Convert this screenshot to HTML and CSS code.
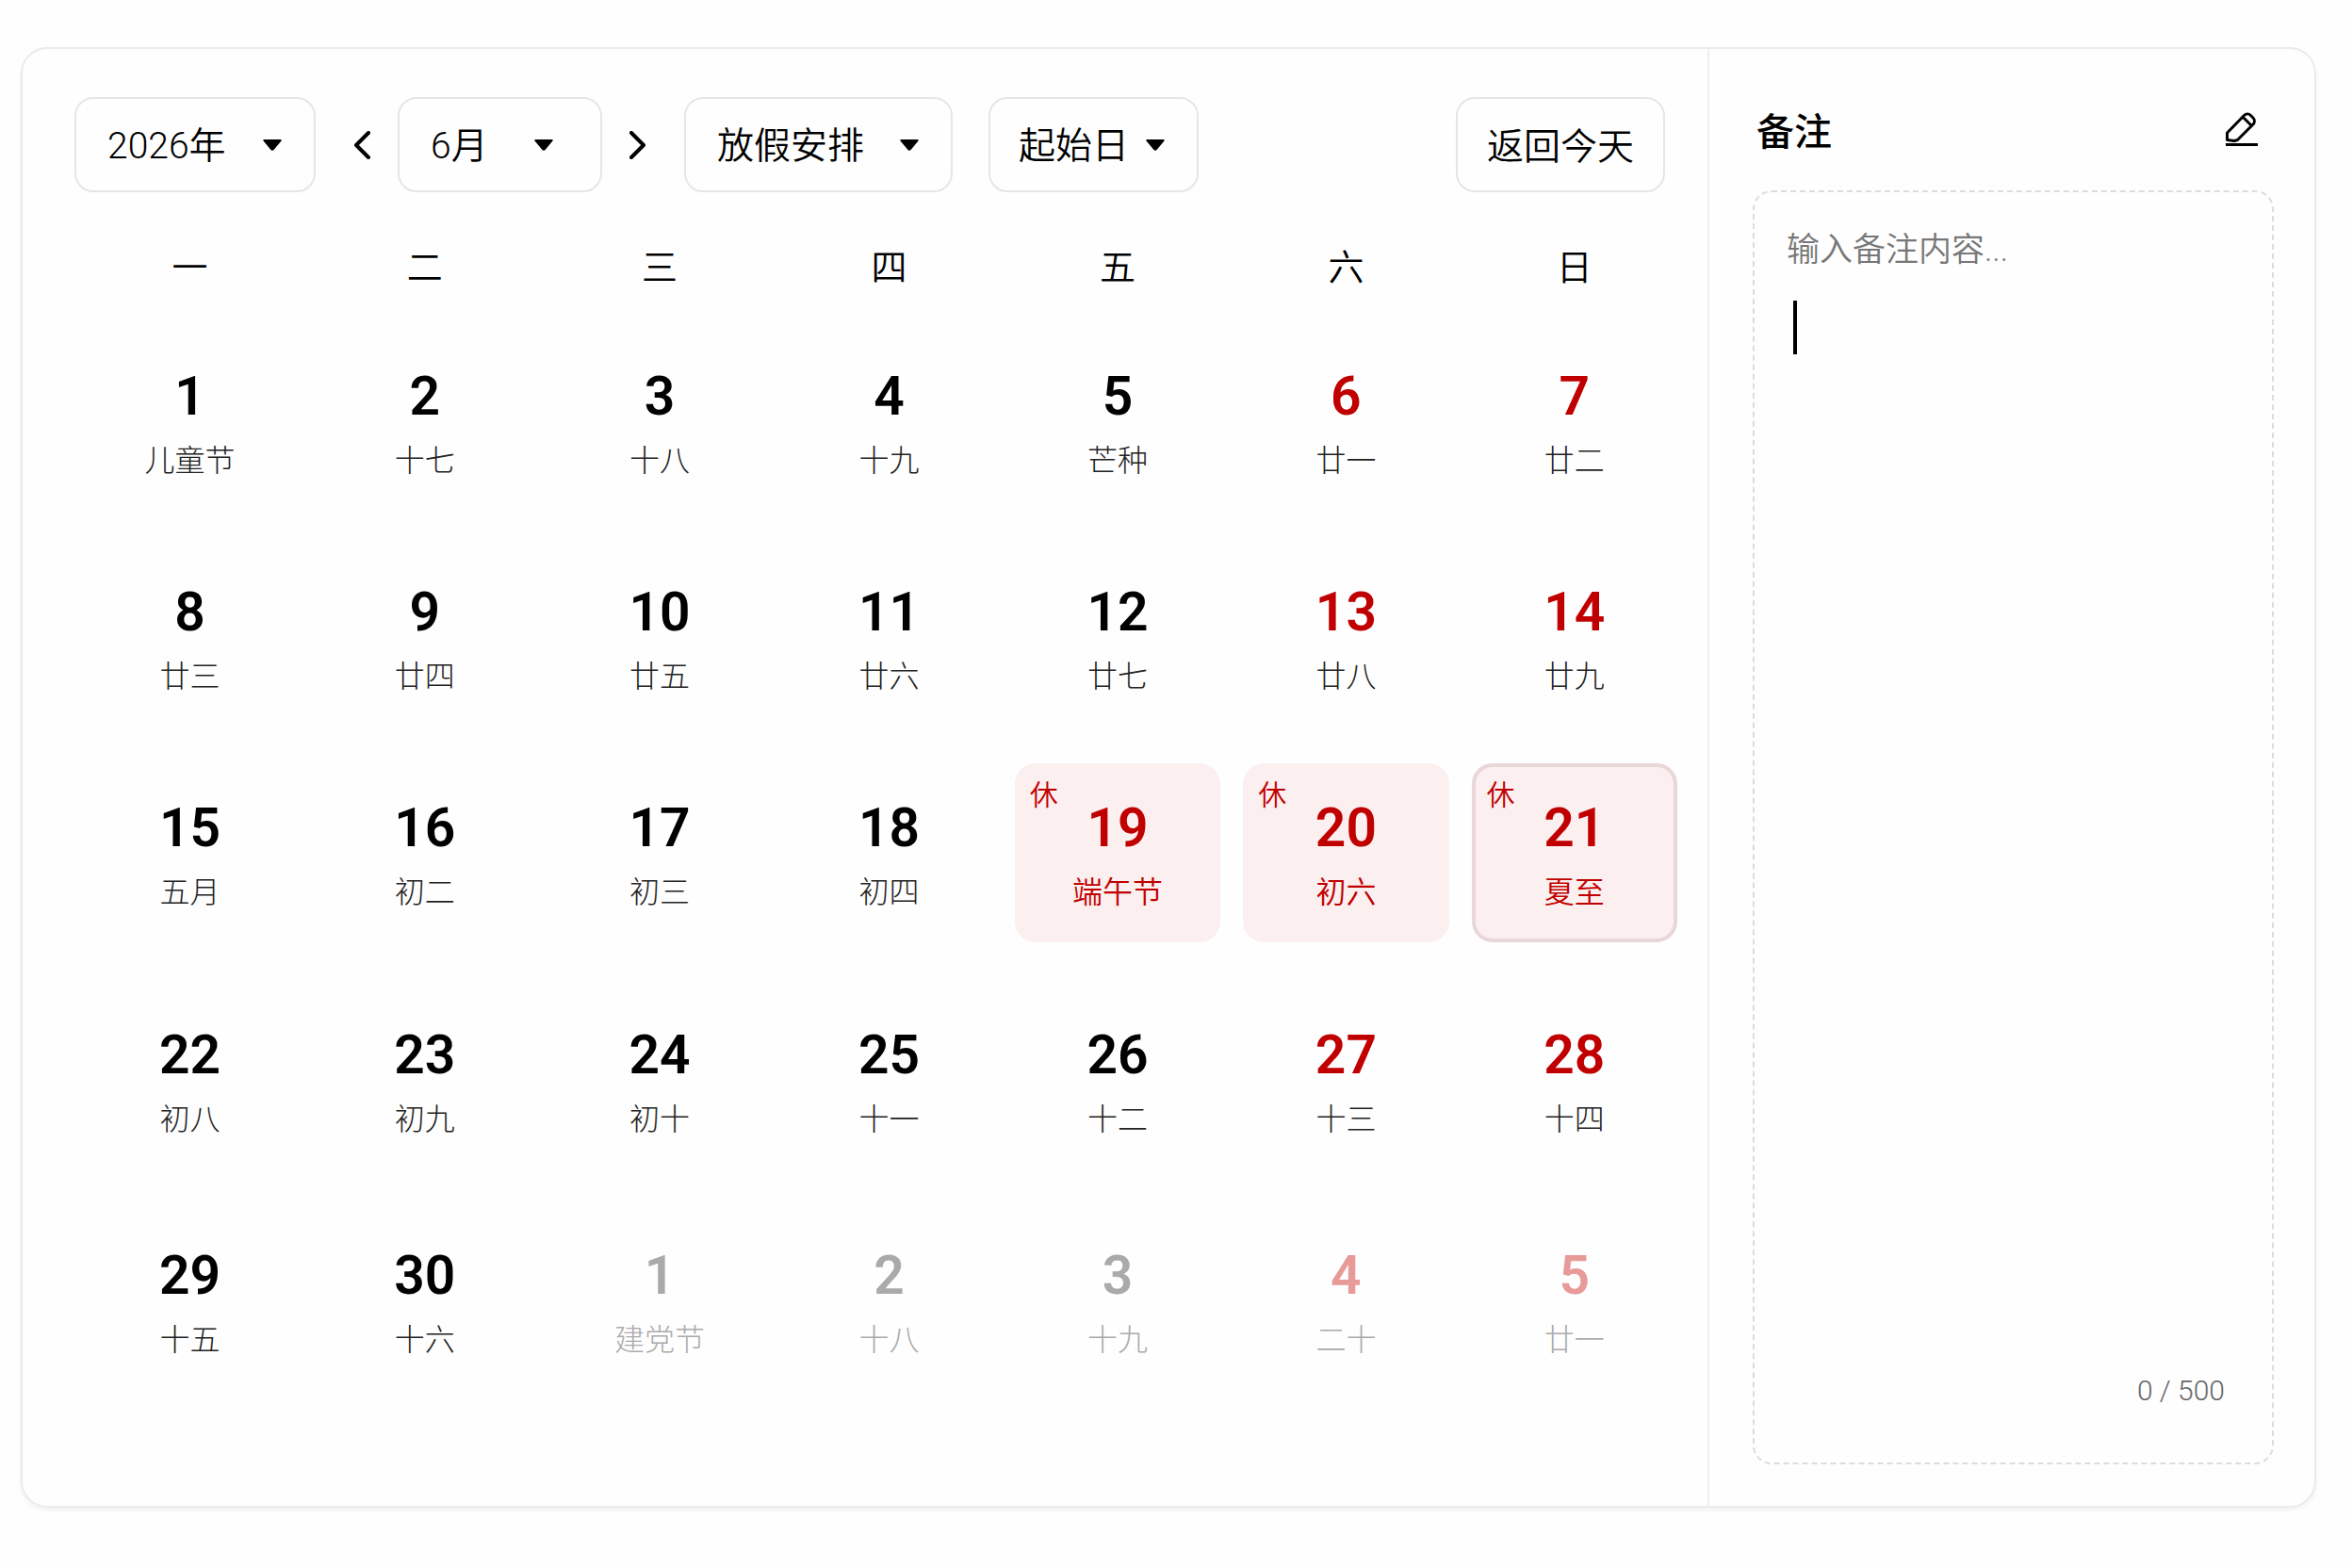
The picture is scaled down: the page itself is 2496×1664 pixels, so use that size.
FILE: index.html
```html
<!DOCTYPE html>
<html lang="zh-CN">
<head>
<meta charset="UTF-8">
<meta name="viewport" content="width=device-width, initial-scale=1.0">
<title>日历</title>
<link rel="stylesheet" href="styles.css">
</head>
<body>
<div class="card">
    <main class="calendar">
        <div class="toolbar">
            <div class="select-box year">
                <select aria-label="年份"><option>2026年</option></select>
                <svg class="arrow" viewBox="0 0 20 12"><path d="M1.500 0h17q2 0 .8 1.800L12 10.500q-2 2.500-4 0L.7 1.800Q-.5 0 1.500 0z"/></svg>
            </div>
            <div class="month-nav">
                <button type="button" class="icon-button" aria-label="上个月">
                    <svg viewBox="0 0 20 30"><path d="M18 2L5 15l13 13"/></svg>
                </button>
                <div class="select-box month">
                    <select aria-label="月份"><option>6月</option></select>
                    <svg class="arrow" viewBox="0 0 20 12"><path d="M1.500 0h17q2 0 .8 1.800L12 10.500q-2 2.500-4 0L.7 1.800Q-.5 0 1.500 0z"/></svg>
                </div>
                <button type="button" class="icon-button" aria-label="下个月">
                    <svg viewBox="0 0 20 30"><path d="M2 2l13 13L2 28"/></svg>
                </button>
            </div>
            <div class="select-box holiday">
                <select aria-label="放假安排"><option>放假安排</option></select>
                <svg class="arrow" viewBox="0 0 20 12"><path d="M1.500 0h17q2 0 .8 1.800L12 10.500q-2 2.500-4 0L.7 1.800Q-.5 0 1.500 0z"/></svg>
            </div>
            <div class="select-box start">
                <select aria-label="起始日"><option>起始日</option></select>
                <svg class="arrow" viewBox="0 0 20 12"><path d="M1.500 0h17q2 0 .8 1.800L12 10.500q-2 2.500-4 0L.7 1.800Q-.5 0 1.500 0z"/></svg>
            </div>
            <button type="button" class="today">返回今天</button>
        </div>

        <table class="month-table">
            <colgroup>
                <col class="col-mon"><col class="col-tue"><col class="col-wed"><col><col><col><col>
            </colgroup>
            <thead>
                <tr><th>一</th><th>二</th><th>三</th><th>四</th><th>五</th><th>六</th><th>日</th></tr>
            </thead>
            <tbody>
                <tr class="week-early">
                    <td><button type="button" class="day"><b>1</b><span>儿童节</span></button></td>
                    <td><button type="button" class="day"><b>2</b><span>十七</span></button></td>
                    <td><button type="button" class="day"><b>3</b><span>十八</span></button></td>
                    <td><button type="button" class="day"><b>4</b><span>十九</span></button></td>
                    <td><button type="button" class="day"><b>5</b><span>芒种</span></button></td>
                    <td><button type="button" class="day weekend"><b>6</b><span>廿一</span></button></td>
                    <td><button type="button" class="day weekend"><b>7</b><span>廿二</span></button></td>
                </tr>
                <tr class="week-early">
                    <td><button type="button" class="day"><b>8</b><span>廿三</span></button></td>
                    <td><button type="button" class="day"><b>9</b><span>廿四</span></button></td>
                    <td><button type="button" class="day"><b>10</b><span>廿五</span></button></td>
                    <td><button type="button" class="day"><b>11</b><span>廿六</span></button></td>
                    <td><button type="button" class="day"><b>12</b><span>廿七</span></button></td>
                    <td><button type="button" class="day weekend"><b>13</b><span>廿八</span></button></td>
                    <td><button type="button" class="day weekend"><b>14</b><span>廿九</span></button></td>
                </tr>
                <tr class="week-holiday">
                    <td><button type="button" class="day"><b>15</b><span>五月</span></button></td>
                    <td><button type="button" class="day"><b>16</b><span>初二</span></button></td>
                    <td><button type="button" class="day"><b>17</b><span>初三</span></button></td>
                    <td><button type="button" class="day"><b>18</b><span>初四</span></button></td>
                    <td><button type="button" class="day rest"><i>休</i><b>19</b><span>端午节</span></button></td>
                    <td><button type="button" class="day rest"><i>休</i><b>20</b><span>初六</span></button></td>
                    <td><button type="button" class="day rest selected"><i>休</i><b>21</b><span>夏至</span></button></td>
                </tr>
                <tr>
                    <td><button type="button" class="day"><b>22</b><span>初八</span></button></td>
                    <td><button type="button" class="day"><b>23</b><span>初九</span></button></td>
                    <td><button type="button" class="day"><b>24</b><span>初十</span></button></td>
                    <td><button type="button" class="day"><b>25</b><span>十一</span></button></td>
                    <td><button type="button" class="day"><b>26</b><span>十二</span></button></td>
                    <td><button type="button" class="day weekend"><b>27</b><span>十三</span></button></td>
                    <td><button type="button" class="day weekend"><b>28</b><span>十四</span></button></td>
                </tr>
                <tr>
                    <td><button type="button" class="day"><b>29</b><span>十五</span></button></td>
                    <td><button type="button" class="day"><b>30</b><span>十六</span></button></td>
                    <td><button type="button" class="day other"><b>1</b><span>建党节</span></button></td>
                    <td><button type="button" class="day other"><b>2</b><span>十八</span></button></td>
                    <td><button type="button" class="day other"><b>3</b><span>十九</span></button></td>
                    <td><button type="button" class="day other weekend"><b>4</b><span>二十</span></button></td>
                    <td><button type="button" class="day other weekend"><b>5</b><span>廿一</span></button></td>
                </tr>
            </tbody>
        </table>
    </main>

    <aside class="notes">
        <div class="notes-head">
            <label class="notes-title" for="note">备注</label>
            <button type="button" class="edit" aria-label="编辑备注">
                <svg viewBox="0 0 36 36"><path d="M2.500 22L20.500 3.500a5 5 0 0 1 7 0l2.500 2.500a5 5 0 0 1 0 7L13.500 29.500 10 30.500 2.500 29.500zM19 5l9.500 9.500"/><path d="M1 34.500h34"/></svg>
            </button>
        </div>
        <div class="notes-box">
            <textarea id="note" maxlength="500" placeholder="输入备注内容..."></textarea>
            <span class="cursor"></span>
            <div class="count">0 / 500</div>
        </div>
    </aside>
</div>
</body>
</html>
```

FILE: styles.css
```css
* {
    box-sizing: border-box;
}
body {
    margin: 0;
    padding: 50px 38px 60px 22px;
    background: #fefefe;
    color: #000;
    font-family: Roboto, "Noto Sans CJK SC", sans-serif;
}
button, select, textarea {
    font-family: inherit;
    color: inherit;
    background: none;
    border: none;
    margin: 0;
    padding: 0;
}
button, select {
    cursor: pointer;
}

.card {
    display: flex;
    border: 2px solid #ebebee;
    border-radius: 28px;
    box-shadow: 0 3px 4px rgba(0, 0, 0, 0.05);
}
.calendar {
    flex: 1;
    padding: 51px 20px 79px 55px;
}

/* toolbar */
.toolbar {
    display: flex;
    align-items: center;
    gap: 38px;
    padding-right: 25px;
}
.month-nav {
    display: flex;
    align-items: center;
    gap: 29px;
}
.select-box {
    position: relative;
}
.select-box select, .today {
    width: 100%;
    height: 101px;
    border: 2px solid #e6e6ea;
    border-radius: 20px;
    font-size: 39px;
    font-weight: 350;
}
.select-box select {
    appearance: none;
    padding-top: 2px;
    padding-left: 33px;
}
.arrow {
    position: absolute;
    right: 36px;
    top: 45px;
    width: 20px;
    height: 12px;
    pointer-events: none;
}
.year {
    width: 256px;
}
.month {
    width: 217px;
}
.month .arrow {
    right: 52px;
}
.holiday {
    width: 285px;
}
.start {
    width: 223px;
}
.start select {
    padding-left: 30px;
}
.toolbar .today {
    width: 222px;
    margin-left: auto;
    padding-bottom: 4px;
}
.icon-button svg {
    display: block;
    width: 20px;
    height: 30px;
    fill: none;
    stroke: #000;
    stroke-width: 4;
    stroke-linecap: round;
    stroke-linejoin: round;
}

/* month grid */
.month-table {
    width: 100%;
    margin-top: 12px;
    table-layout: fixed;
    border-collapse: collapse;
}
.col-mon, .col-wed {
    width: 14.3%;
}
.col-tue {
    width: 14.8%;
}
th {
    height: 136px;
    padding: 0 0 8px;
    font-size: 38px;
    font-weight: 350;
}
td {
    height: 234px;
    padding: 0 12px;
    vertical-align: top;
}
.week-early td {
    height: 229px;
}
.week-holiday td {
    height: 241px;
}
.day {
    position: relative;
    display: flex;
    flex-direction: column;
    align-items: center;
    gap: 18px;
    width: 100%;
    height: 190px;
    padding-top: 35px;
    border: 4px solid transparent;
    border-radius: 22px;
}
.day b {
    font-size: 57px;
    font-weight: 600;
    line-height: 60px;
}
.day span {
    font-size: 32px;
    font-weight: 300;
    line-height: 40px;
    color: #222;
}
.day i {
    position: absolute;
    left: 12px;
    top: 10px;
    font-size: 30px;
    font-style: normal;
    font-weight: 350;
    line-height: 40px;
}
.weekend b, .rest, .rest span {
    color: #c00000;
}
.rest {
    background: #fcefef;
}
.rest span {
    font-weight: 350;
}
.selected {
    border-color: #e8d6d8;
}
.other b, .other span {
    color: #aaa;
}
.other.weekend b {
    color: #e89a98;
}

/* notes */
.notes {
    display: flex;
    flex-direction: column;
    width: 644px;
    padding: 50px 43px 44px 46px;
    border-left: 2px solid #f0f0f2;
}
.notes-head {
    display: flex;
    align-items: center;
    justify-content: space-between;
    height: 70px;
    margin-bottom: 30px;
    padding: 0 16px 0 4px;
}
.notes-title {
    font-size: 40px;
    font-weight: 500;
}
.edit svg {
    display: block;
    width: 36px;
    height: 36px;
    fill: none;
    stroke: #000;
    stroke-width: 3;
    stroke-linejoin: round;
}
.notes-box {
    position: relative;
    display: flex;
    flex-direction: column;
    flex: 1;
    padding: 36px 50px 56px 34px;
    border: 2px dashed #dcdce0;
    border-radius: 20px;
}
.notes-box textarea {
    flex: 1;
    resize: none;
    outline: none;
    font-size: 35px;
    font-weight: 350;
    line-height: 52px;
}
.notes-box textarea::placeholder {
    color: #777;
}
.cursor {
    position: absolute;
    left: 41px;
    top: 115px;
    width: 4px;
    height: 57px;
    background: #000;
}
.count {
    font-size: 30px;
    font-weight: 300;
    line-height: 40px;
    text-align: right;
    color: #666;
}
```
